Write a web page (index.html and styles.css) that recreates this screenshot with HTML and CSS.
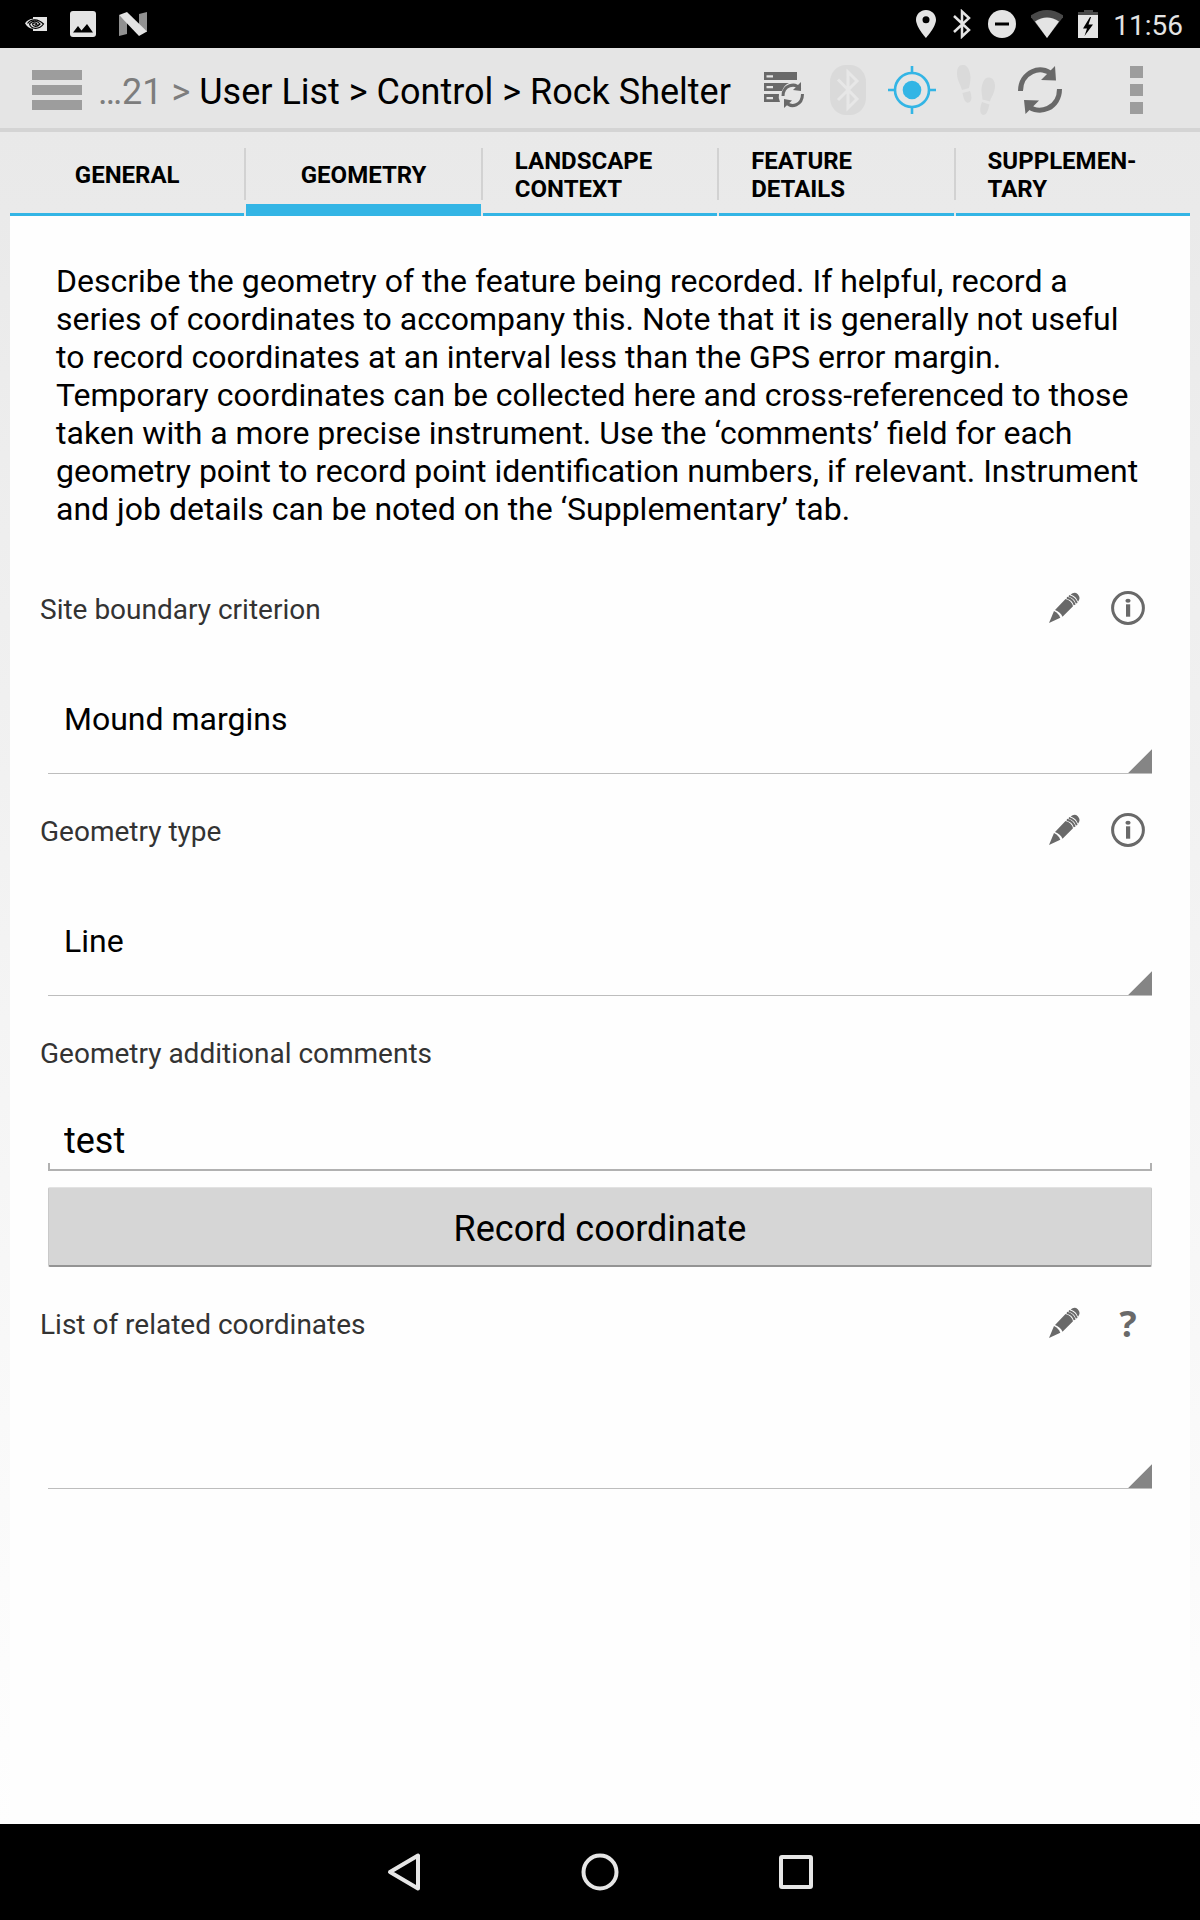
FILE: index.html
```html
<!DOCTYPE html>
<html lang="en">
<head>
<meta charset="utf-8">
<meta name="viewport" content="width=device-width, initial-scale=1">
<title>Rock Shelter</title>
<link rel="stylesheet" href="styles.css">
</head>
<body>
<svg class="defs" aria-hidden="true">
  <symbol id="pencil" viewBox="0 0 32 32">
    <g fill="#696969">
      <path d="M1 31 L6 19 Q10.5 21 12.3 25.800 Z"/>
      <path d="M7 18 L17.500 7 Q23.500 8.500 25 14.200 L14.500 24.800 Q12.500 20 7 18Z"/>
      <path d="M22.600 2.400 Q26.500-.6 29.800 2.200 Q33.200 5.800 30 9.800 Q28.400 4.400 22.600 2.400Z"/>
    </g>
    <g fill="none" stroke="#696969" stroke-width="1.900">
      <path d="M18.800 5.800 Q25.200 7.200 26.600 13M20.800 3.800 Q27.200 5.400 28.700 11.200"/>
    </g>
  </symbol>
  <symbol id="info" viewBox="0 0 34 34">
    <circle cx="17" cy="17" r="15.4" fill="#fefefe" stroke="#696969" stroke-width="3"/>
    <ellipse cx="17" cy="9.7" rx="2.6" ry="2" fill="#696969"/>
    <path d="M15 13.3h4.2v12.4H15z" fill="#696969"/>
  </symbol>
</svg>

<header class="status">
  <div class="status-left">
    <svg width="22" height="14" viewBox="0 0 22 14"><path d="M8 0h14v14H8v-2.2C4 11.3 1.500 9 0 6.200 2 3.200 5 2 8 1.800z" fill="#e4e4e4"/><path d="M2.500 6.500C6 1.500 13 1.500 18.500 7 14 13 6 12.500 4.500 6.800 8 2.800 12.500 3.500 15 7 12 10.500 8 9.800 7.500 7 9 5.200 11 5.500 12 7.200L9.800 8" fill="none" stroke="#000" stroke-width="1.200"/></svg>
    <svg width="26" height="26" viewBox="0 0 26 26"><rect width="26" height="26" rx="3" fill="#e4e4e4"/><path d="M3 21.500 8 15l3.500 4.500L17 13l6 8.500z"/></svg>
    <svg width="28" height="24" viewBox="0 0 28 24"><path d="M0 3l8 7v12l-8 2zM20 2l8-2v20l-8-6z" fill="#919191"/><path d="M0 3 8 0 28 19.500 20 24z" fill="#e4e4e4"/></svg>
  </div>
  <div class="status-right">
    <svg width="20" height="28" viewBox="0 0 20 28"><path fill-rule="evenodd" d="M10 0C4.500 0 0 4.400 0 9.800 0 17 10 28 10 28S20 17 20 9.800C20 4.400 15.500 0 10 0zm0 6.300a3.500 3.500 0 1 1 0 7 3.500 3.500 0 0 1 0-7z" fill="#e4e4e4"/></svg>
    <svg width="22" height="30" viewBox="-2 0 22 30"><path d="M1 7l15 14-7 6.500V2.500L16 9 1 23" fill="none" stroke="#e4e4e4" stroke-width="2.500"/></svg>
    <svg width="28" height="28" viewBox="0 0 28 28"><circle cx="14" cy="14" r="14" fill="#e4e4e4"/><path d="M7 12.500h14v3H7z"/></svg>
    <svg width="32" height="28" viewBox="1 0 32 28"><path d="M0 6Q17-6 34 6L17 28z" fill="#494949"/><path d="M5 11.500q12-8 24 0L17 28z" fill="#e4e4e4"/></svg>
    <svg width="20" height="28" viewBox="0 0 20 28"><path d="M6 0h9v2h5v4H0V2h6z" fill="#494949"/><path d="M0 5h20v23H0z" fill="#e4e4e4"/><path d="M12 7 5 18.500h4L6.500 26 15 14.500h-4.500L13 7z"/></svg>
    <time>11:56</time>
  </div>
</header>

<div class="appbar">
  <button class="menu" aria-label="Menu"><span></span><span></span><span></span></button>
  <nav class="crumbs" aria-label="Breadcrumb"><a class="faded" href="#">…21 &gt; </a><a href="#">User List</a> &gt; <a href="#">Control</a> &gt; <a href="#">Rock Shelter</a></nav>
  <div class="actions">
    <button aria-label="Server sync"><svg width="40" height="36" viewBox="0 0 40 36"><path fill="#696969" fill-rule="evenodd" d="M0 0h33v8H0zM2.500 3.200v2.200H9V3.200zM0 11h25q-5 2-7 8H0zM2.500 14v2.200H9V14zM0 22h15q-1 4 1 8H0zM2.500 25v2.200H9V25z"/><path d="M19 24C19 13 31 10 36 17M38.500 22c0 11-11 15-17 8" fill="none" stroke="#696969" stroke-width="3"/><path d="M37 10v9l-8-1zM20 36v-9l8 1.500z" fill="#696969"/></svg></button>
    <button aria-label="Bluetooth"><svg width="36" height="50" viewBox="0 0 36 50"><rect width="36" height="50" rx="16" ry="17" fill="#dadada"/><path d="M8 14.500 27 34 18 43V7l9 9L8 35" fill="none" stroke="#e7e7e7" stroke-width="3"/></svg></button>
    <button aria-label="Location"><svg width="48" height="48" viewBox="0 0 48 48"><circle cx="24" cy="24" r="9.300" fill="#33b5e5"/><circle cx="24" cy="24" r="17" fill="none" stroke="#33b5e5" stroke-width="2.600"/><path d="M24 0v7M24 41v7M0 24h7M41 24h7" stroke="#33b5e5" stroke-width="2.600"/></svg></button>
    <button aria-label="Track log"><svg width="38" height="50" viewBox="0 0 38 50" fill="#dadada"><path d="M5 0c5-1 8 5 8.500 12 0 5-1 8-1.500 11l-7 2C3.500 19 0 16 0 8 0 3 2 0 5 0zM5.500 28l7.500-2c2 5 2 10-1 11.500-4 1-5.500-4-6.500-9.500zM32 12.500c-5-.5-7 6-7.500 12 0 5 1 7 1 10l7.500 2C34 32 38 28 38 21c0-5-2.500-8.500-6-8.500zM25 37l7.500 2.500C31 45 30 50 26 50c-4-1-3-8-1-13z"/></svg></button>
    <button aria-label="Refresh"><svg width="44" height="48" viewBox="0 0 44 48"><path d="M2.500 25C2.500 6 23-2 34 8.500M41.500 23c0 19-20 27-32 16.500" fill="none" stroke="#696969" stroke-width="5"/><path d="M37 0l1 14.500-15-.5zM6 34l15 .5L7.500 48z" fill="#696969"/></svg></button>
    <button class="more" aria-label="More options"><span></span><span></span><span></span></button>
  </div>
</div>

<div class="screen">
  <div class="tabs" role="tablist">
    <button class="tab" role="tab"><span>GENERAL</span></button>
    <button class="tab active" role="tab" aria-selected="true"><span>GEOMETRY</span></button>
    <button class="tab" role="tab"><span>LANDSCAPE CONTEXT</span></button>
    <button class="tab" role="tab"><span>FEATURE DETAILS</span></button>
    <button class="tab" role="tab"><span>SUPPLEMEN-TARY</span></button>
  </div>

  <main class="panel">
    <p class="intro">Describe the geometry of the feature being recorded. If helpful, record a series of coordinates to accompany this. Note that it is generally not useful to record coordinates at an interval less than the GPS error margin. Temporary coordinates can be collected here and cross-referenced to those taken with a more precise instrument. Use the ‘comments’ field for each geometry point to record point identification numbers, if relevant. Instrument and job details can be noted on the ‘Supplementary’ tab.</p>

    <div class="heading">
      <label for="criterion">Site boundary criterion</label>
      <button aria-label="Annotate"><svg width="32" height="32"><use href="#pencil"/></svg></button>
      <button aria-label="Information"><svg width="34" height="34"><use href="#info"/></svg></button>
    </div>
    <select id="criterion" class="spinner"><option>Mound margins</option></select>

    <div class="heading">
      <label for="type">Geometry type</label>
      <button aria-label="Annotate"><svg width="32" height="32"><use href="#pencil"/></svg></button>
      <button aria-label="Information"><svg width="34" height="34"><use href="#info"/></svg></button>
    </div>
    <select id="type" class="spinner"><option>Line</option></select>

    <div class="heading">
      <label for="comments">Geometry additional comments</label>
    </div>
    <input id="comments" class="textbox" type="text" value="test">
    <button class="record">Record coordinate</button>

    <div class="heading">
      <label for="related">List of related coordinates</label>
      <button aria-label="Annotate"><svg width="32" height="32"><use href="#pencil"/></svg></button>
      <button class="help" aria-label="Help">?</button>
    </div>
    <select id="related" class="spinner"><option></option></select>
  </main>
</div>

<footer class="navbar">
  <button aria-label="Back"><svg width="34" height="40" viewBox="0 0 34 40"><path d="M31 3.500v33L3 20z" fill="none" stroke="#e6e6e6" stroke-width="4" stroke-linejoin="round"/></svg></button>
  <button aria-label="Home"><svg width="38" height="38" viewBox="0 0 38 38"><circle cx="19" cy="19" r="16.500" fill="none" stroke="#e6e6e6" stroke-width="4"/></svg></button>
  <button aria-label="Overview"><svg width="34" height="34" viewBox="0 0 34 34"><rect x="2" y="2" width="30" height="30" rx="1" fill="none" stroke="#e6e6e6" stroke-width="4"/></svg></button>
</footer>
</body>
</html>
```
FILE: styles.css
```css
* {
  box-sizing: border-box;
}

body {
  margin: 0;
  min-height: 100vh;
  display: flex;
  flex-direction: column;
  background: #fefefe;
  color: #000;
  font-family: Roboto, sans-serif;
}

button {
  display: flex;
  align-items: center;
  justify-content: center;
  margin: 0;
  padding: 0;
  border: 0;
  background: none;
  color: inherit;
  font: inherit;
}

svg {
  display: block;
}

.defs {
  position: absolute;
  width: 0;
  height: 0;
}

/* System status bar */

.status {
  display: flex;
  justify-content: space-between;
  height: 48px;
  padding: 0 17px 0 25px;
  background: #000;
  color: #e4e4e4;
  font-size: 28px;
}

.status-left,
.status-right {
  display: flex;
  align-items: center;
}

.status-left {
  gap: 23px;
}

.status-right {
  gap: 15px;
}

.status time {
  padding-top: 2px;
}

/* Application bar */

.appbar {
  display: flex;
  align-items: center;
  height: 84px;
  padding-top: 4px;
  border-bottom: 4px solid #d4d4d4;
  background: #e5e5e5;
}

.menu {
  flex-direction: column;
  gap: 5px;
  padding: 0 16px 0 32px;
}

.menu span {
  width: 50px;
  height: 10px;
  background: #9d9d9d;
}

.crumbs {
  flex: 1;
  padding-top: 4px;
  font-size: 36px;
  line-height: 42px;
  white-space: pre;
}

.crumbs a {
  color: inherit;
  text-decoration: none;
}

.crumbs .faded {
  color: #7d7d7d;
}

.actions {
  display: flex;
}

.actions button {
  width: 64px;
  height: 64px;
}

.actions .more {
  flex-direction: column;
  gap: 6px;
  width: 128px;
}

.more span {
  width: 13px;
  height: 12px;
  background: #9d9d9d;
}

/* Tabs */

.screen {
  flex: 1;
  display: flex;
  flex-direction: column;
  padding: 0 10px;
  background: linear-gradient(#e9e9e9, #fefefe);
}

.tabs {
  display: grid;
  grid-template-columns: repeat(5, 1fr);
  gap: 2px;
  height: 84px;
}

.tab {
  position: relative;
  padding: 5px 32px 0;
  border-bottom: 3px solid #33b5e5;
  font-size: 24px;
  font-weight: 700;
  line-height: 28px;
  text-align: left;
}

.tab + .tab::before {
  content: "";
  position: absolute;
  left: -2px;
  top: 16px;
  width: 2px;
  height: 52px;
  background: #d2d2d2;
}

.tab.active {
  padding-top: 14px;
  border-bottom-width: 12px;
}

/* Form */

.panel {
  flex: 1;
  display: flex;
  flex-direction: column;
  padding: 46px 38px 24px;
  background: #fefefe;
}

.intro {
  margin: 0 0 24px;
  padding: 0 8px;
  font-size: 32px;
  line-height: 38px;
}

.heading {
  display: flex;
  align-items: center;
  height: 112px;
  margin: 0 -8px;
  color: #333;
  font-size: 28px;
}

.heading label {
  flex: 1;
  padding-top: 2px;
}

.heading button {
  width: 64px;
  height: 64px;
}

.heading .help {
  color: #696969;
  font-family: "Open Sans", sans-serif;
  font-size: 36px;
  font-weight: 700;
}

.spinner {
  appearance: none;
  height: 110px;
  padding: 0 16px;
  border: 0;
  border-bottom: 1px solid #bdbdbd;
  border-radius: 0;
  background: linear-gradient(135deg, transparent 49%, #858585 52%) right bottom / 24px 24px no-repeat;
  color: #000;
  font: 32px Roboto, sans-serif;
}

.textbox {
  height: 63px;
  padding: 12px 16px 9px;
  border: 0;
  border-radius: 0;
  background:
    linear-gradient(#b1b1b1, #b1b1b1) left bottom / 2px 8px no-repeat,
    linear-gradient(#b1b1b1, #b1b1b1) right bottom / 2px 8px no-repeat,
    linear-gradient(#b1b1b1, #b1b1b1) left bottom / 100% 2px no-repeat;
  color: #000;
  font: 36px Roboto, sans-serif;
}

.record {
  height: 80px;
  margin-top: 16px;
  padding-top: 4px;
  border: 1px solid #c9c9c9;
  border-top-color: #e2e2e2;
  border-bottom: 2px solid #949494;
  border-radius: 2px;
  background: #d6d6d6;
  font-size: 36px;
}

/* System navigation bar */

.navbar {
  display: grid;
  grid-template-columns: repeat(3, 196px);
  justify-content: center;
  height: 96px;
  background: #000;
}
```
